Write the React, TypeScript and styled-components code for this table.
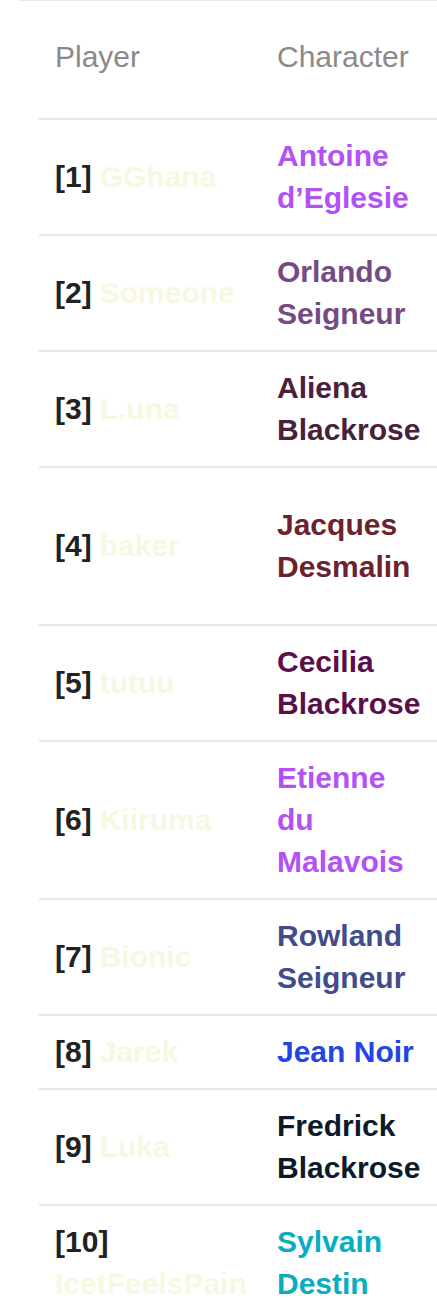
import React from "react";
import styled, { createGlobalStyle } from "styled-components";

const GlobalStyle = createGlobalStyle`
  html, body {
    margin: 0;
    padding: 0;
    background: #ffffff;
    overflow-x: hidden;
  }
  body {
    font-family: "Liberation Sans", Arial, sans-serif;
  }
`;

const players = [
  { player: "GGhana", character: "Antoine d’Eglesie", color: "#b252f6" },
  { player: "Someone", character: "Orlando Seigneur", color: "#744b82" },
  { player: "L.una", character: "Aliena Blackrose", color: "#4a213a" },
  { player: "baker", character: "Jacques Desmalin", color: "#6c222d", lines: 3 },
  { player: "tutuu", character: "Cecilia Blackrose", color: "#5b0f49" },
  { player: "Kiiruma", character: "Etienne du Malavois", color: "#b252f6" },
  { player: "Bionic", character: "Rowland Seigneur", color: "#414c8b" },
  { player: "Jarek", character: "Jean Noir", color: "#2245e3" },
  { player: "Luka", character: "Fredrick Blackrose", color: "#0c1a2a" },
  { player: "IcetFeelsPain", character: "Sylvain Destin", color: "#07adc0" },
];

export default function App() {
  return (
    <>
      <GlobalStyle />
      <Wrapper>
        <Table>
          <HeaderRow>
            <HeaderCell $first>Player</HeaderCell>
            <HeaderCell>Character</HeaderCell>
          </HeaderRow>
          {players.map((p, i) => (
            <Row key={p.player}>
              <PlayerCell>
                <Index>[{i + 1}]</Index> <PlayerName>{p.player}</PlayerName>
              </PlayerCell>
              <CharacterCell $color={p.color} $lines={p.lines || 1}>
                <span>{p.character}</span>
              </CharacterCell>
            </Row>
          ))}
        </Table>
      </Wrapper>
    </>
  );
}

const Wrapper = styled.div`
  margin-left: 19px;
  border-top: 1px solid #e8e8e8;
`;

const Table = styled.div`
  margin-left: 20px;
  width: 398px;
  display: flex;
  flex-direction: column;
`;

const HeaderRow = styled.div`
  display: grid;
  grid-template-columns: 224px 1fr;
  border-bottom: 2px solid #e6e6e6;
`;

const HeaderCell = styled.div<{ $first?: boolean }>`
  padding: 35px 14px 40px ${(p) => (p.$first ? "16px" : "14px")};
  font-size: 30px;
  line-height: 42px;
  color: #8a8a8a;
`;

const Row = styled.div`
  display: grid;
  grid-template-columns: 224px 1fr;
  border-bottom: 2px solid #e6e6e6;
`;

const PlayerCell = styled.div`
  padding: 15px 12px 15px 16px;
  display: flex;
  flex-wrap: wrap;
  align-items: center;
  align-content: center;
  column-gap: 8px;
  font-size: 30px;
  line-height: 42px;
  font-weight: bold;
`;

const Index = styled.span`
  color: #222222;
`;

const PlayerName = styled.span`
  color: #f8f8e2;
`;

const CharacterCell = styled.div<{ $color: string; $lines: number }>`
  padding: 15px 14px;
  display: flex;
  align-items: center;
  min-height: ${(p) => p.$lines * 42}px;
  font-size: 30px;
  line-height: 42px;
  font-weight: bold;
  color: ${(p) => p.$color};
`;
